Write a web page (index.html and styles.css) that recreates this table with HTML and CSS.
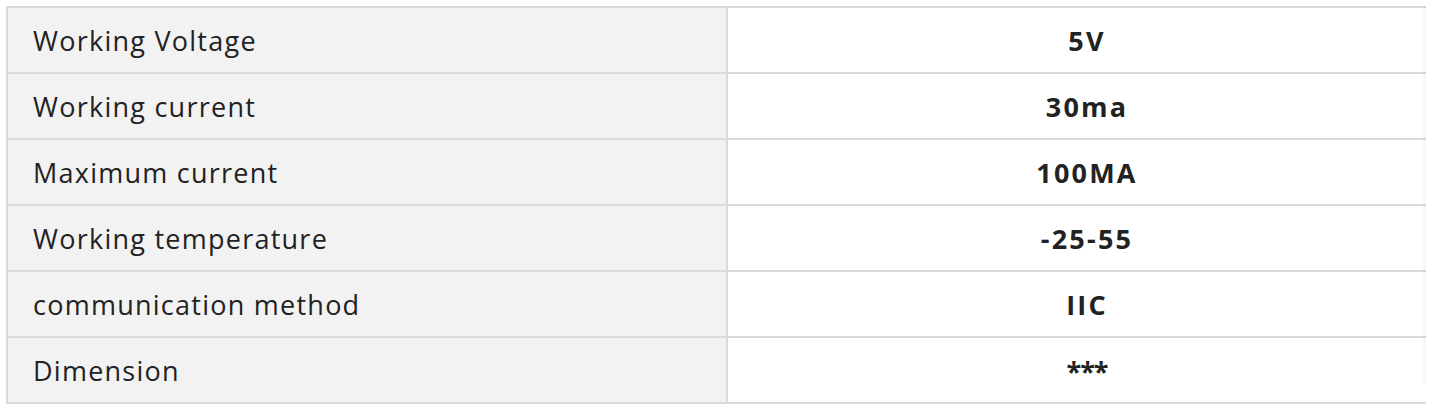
FILE: index.html
```html
<!DOCTYPE html>
<html>
<head>
<meta charset="utf-8">
<link rel="stylesheet" href="styles.css">
</head>
<body>
<div class="wrap">
  <table class="spec">
    <tr><td class="k">Working Voltage</td><td class="v">5V</td></tr>
    <tr><td class="k">Working current</td><td class="v">30ma</td></tr>
    <tr><td class="k">Maximum current</td><td class="v">100MA</td></tr>
    <tr><td class="k">Working temperature</td><td class="v">-25-55</td></tr>
    <tr><td class="k">communication method</td><td class="v">IIC</td></tr>
    <tr><td class="k">Dimension</td><td class="v v-tight">***</td></tr>
  </table>
  <div class="shade"></div>
</div>
</body>
</html>
```
FILE: styles.css
```css
html, body { margin: 0; padding: 0; background: #fff; }
body { padding: 6px 11px 0 6px; }
.wrap { position: relative; overflow: hidden; width: 1420px; }
.spec {
  border-collapse: collapse;
  width: 1442px;
  table-layout: fixed;
  font-family: "Open Sans", "Noto Sans", sans-serif;
  font-size: 27px;
  letter-spacing: 1.25px;
  color: #222;
}
.spec td {
  border: 2px solid #dadada;
  height: 66px;
  padding: 0 0 0 25px;
  box-sizing: border-box;
  vertical-align: middle;
}
.spec .k { background: #f2f2f2; width: 720px; }
.spec .v { background: #fff; text-align: center; font-weight: 700; letter-spacing: 2.2px; padding: 0; }
.spec .v-tight { letter-spacing: -1px; }
.shade {
  position: absolute; right: 0; top: 0; bottom: 20px; width: 6px;
  background: linear-gradient(to right, rgba(0,0,0,0), rgba(0,0,0,0.04));
}
```
